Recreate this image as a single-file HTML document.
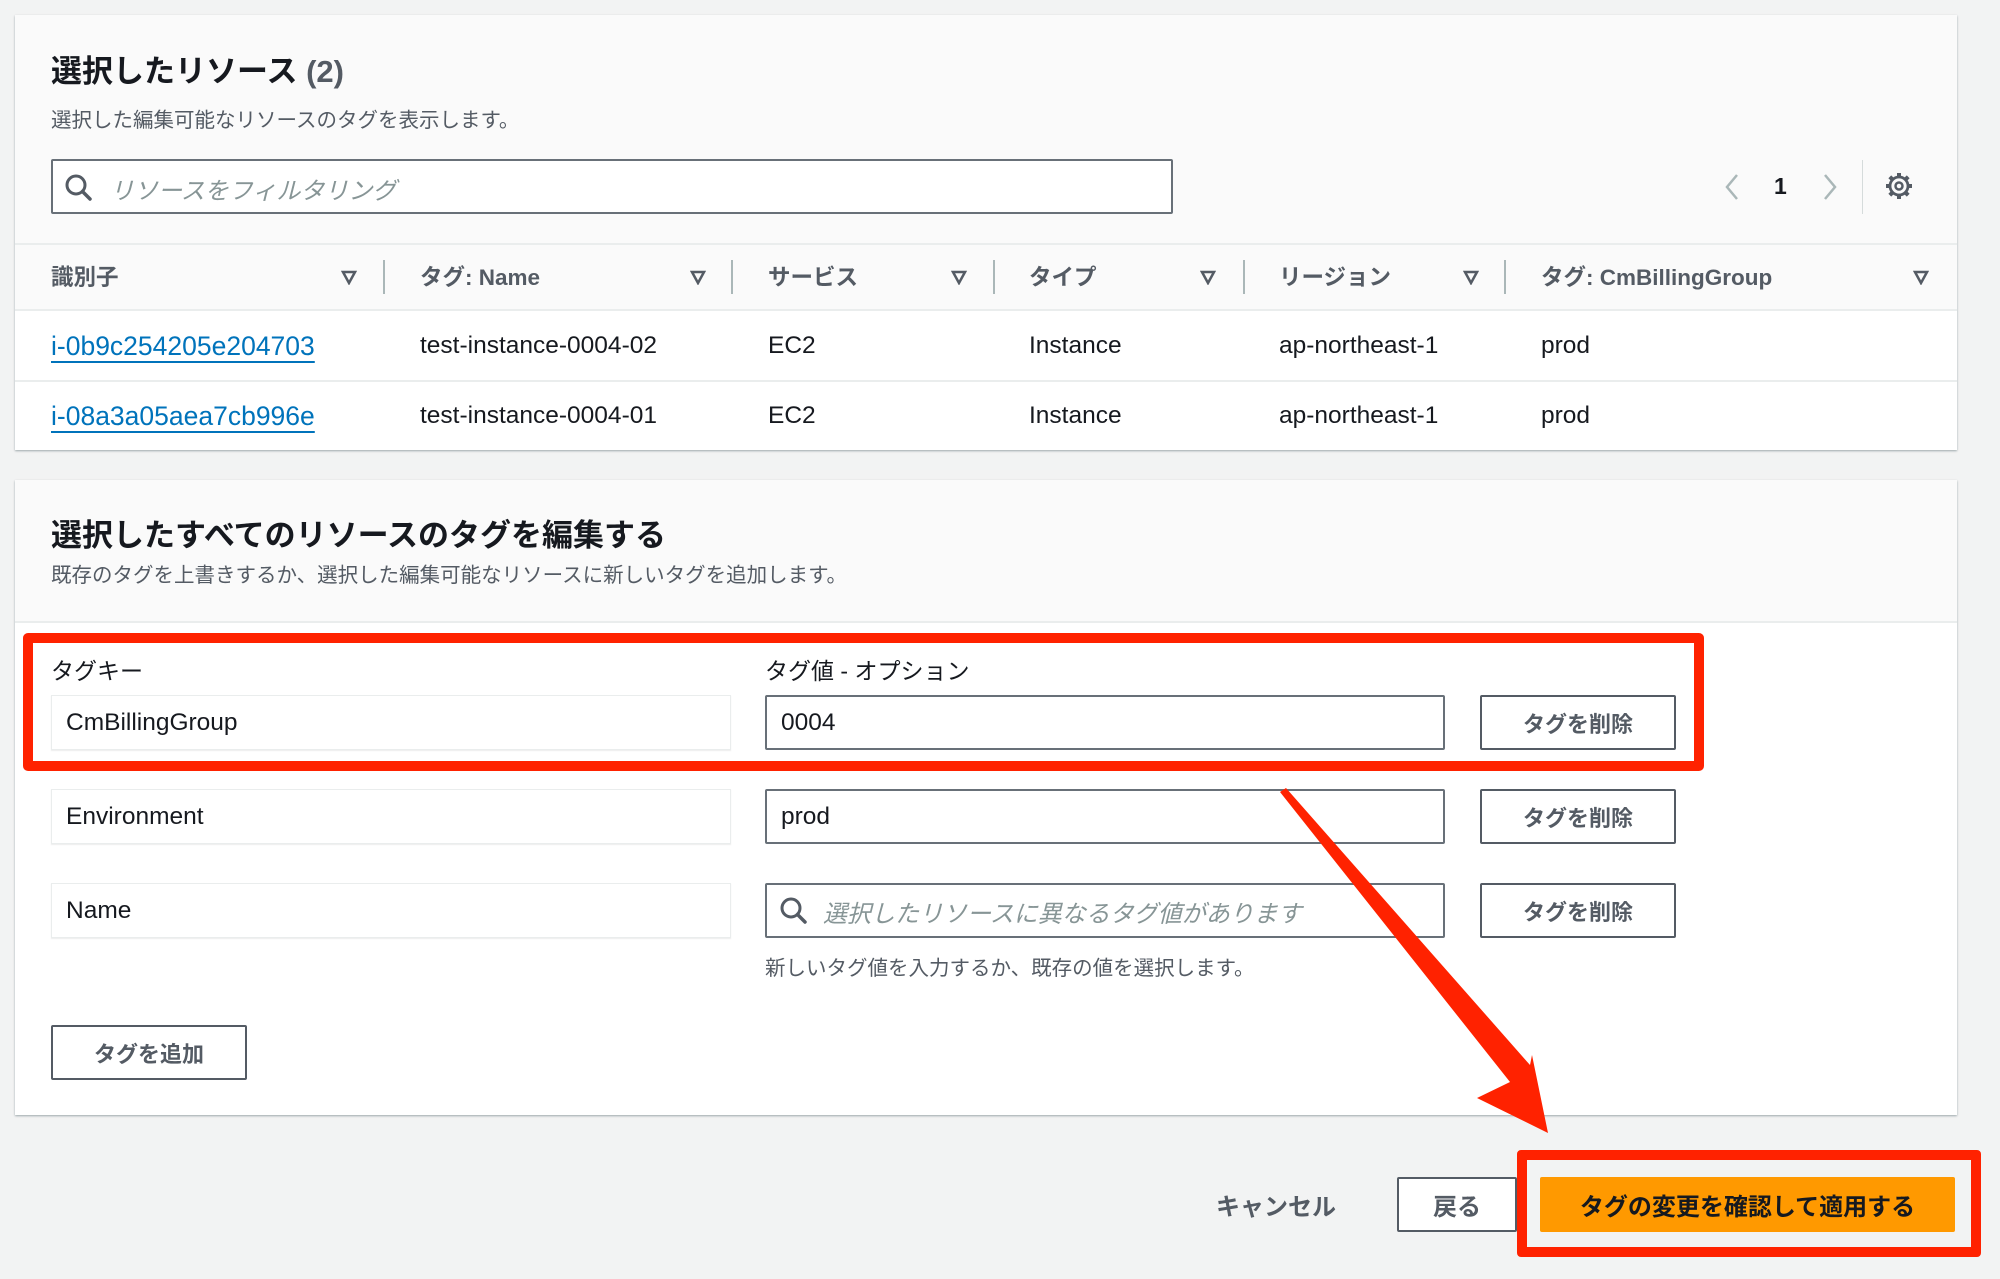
<!DOCTYPE html>
<html><head><meta charset="utf-8"><style>
*{box-sizing:border-box;margin:0;padding:0}
body{width:2000px;height:1279px;background:#f2f3f3;font-family:"Liberation Sans","Noto Sans CJK JP",sans-serif;color:#16191f;position:relative;overflow:hidden}
.a{position:absolute;white-space:nowrap}
.panel{position:absolute;background:#fafafa;box-shadow:0 1px 2px rgba(0,28,36,.35);}
.h1{font-size:31px;font-weight:bold}
.sub{font-size:20.5px;color:#545b64}
.inp{position:absolute;background:#fff;border:2px solid #687078;border-radius:2px}
.ro{position:absolute;background:#fff;border:1px solid #eaeded;box-shadow:0 1px 1px rgba(0,0,0,.08)}
.txt{font-size:24.5px;line-height:1}
.btn{position:absolute;background:#fff;border:2px solid #545b64;border-radius:2px;font-size:22px;font-weight:bold;color:#545b64;display:flex;align-items:center;justify-content:center}
.th{font-size:22.5px;font-weight:bold;color:#545b64}
.div{position:absolute;width:2px;height:34px;background:#aab7b8;top:260px}
.tri{position:absolute;top:270px}
.link{color:#0073bb;text-decoration:underline;text-underline-offset:6px;text-decoration-thickness:2px;font-size:26.5px}
</style></head><body>

<div class="panel" style="left:15px;top:15px;width:1942px;height:435px"></div>
<div class="a h1" style="left:51px;top:46px">選択したリソース <span style="color:#545b64">(2)</span></div>
<div class="a sub" style="left:51px;top:103px">選択した編集可能なリソースのタグを表示します。</div>
<div class="inp" style="left:51px;top:159px;width:1122px;height:55px"></div>
<svg class="a" style="left:64px;top:173px" width="30" height="30" viewBox="0 0 30 30"><circle cx="12" cy="12" r="9" fill="none" stroke="#545b64" stroke-width="3"/><line x1="18.5" y1="18.5" x2="26" y2="26" stroke="#545b64" stroke-width="3.5" stroke-linecap="round"/></svg>
<div class="a" style="left:110px;top:171px;font-size:24px;font-style:italic;color:#879596">リソースをフィルタリング</div>
<svg class="a" style="left:1722px;top:172px" width="20" height="30"><polyline points="15,3 5,15 15,27" fill="none" stroke="#aab7b8" stroke-width="2.5"/></svg>
<div class="a" style="left:1774px;top:173px;font-size:23px;font-weight:bold">1</div>
<svg class="a" style="left:1820px;top:172px" width="20" height="30"><polyline points="5,3 15,15 5,27" fill="none" stroke="#aab7b8" stroke-width="2.5"/></svg>
<div class="a" style="left:1862px;top:160px;width:1px;height:54px;background:#d5dbdb"></div>
<svg class="a" style="left:1884px;top:171px" width="30" height="30" viewBox="0 0 30 30"><circle cx="15" cy="15" r="9" fill="none" stroke="#545b64" stroke-width="2.8"/><circle cx="15" cy="15" r="3.5" fill="none" stroke="#545b64" stroke-width="2.5"/><g stroke="#545b64" stroke-width="4"><line x1="15" y1="2" x2="15" y2="6"/><line x1="15" y1="24" x2="15" y2="28"/><line x1="2" y1="15" x2="6" y2="15"/><line x1="24" y1="15" x2="28" y2="15"/><line x1="5.8" y1="5.8" x2="8.6" y2="8.6"/><line x1="21.4" y1="21.4" x2="24.2" y2="24.2"/><line x1="5.8" y1="24.2" x2="8.6" y2="21.4"/><line x1="21.4" y1="8.6" x2="24.2" y2="5.8"/></g></svg>

<div class="a" style="left:15px;top:243px;width:1942px;height:2px;background:#eaeded"></div>
<div class="a" style="left:15px;top:310px;width:1942px;height:140px;background:#fff"></div>
<div class="a" style="left:15px;top:309px;width:1942px;height:2px;background:#eaeded"></div>
<div class="a" style="left:15px;top:380px;width:1942px;height:2px;background:#eaeded"></div>
<div class="a th" style="left:51px;top:260px">識別子</div>
<div class="a th" style="left:420px;top:260px">タグ: Name</div>
<div class="a th" style="left:768px;top:260px">サービス</div>
<div class="a th" style="left:1029px;top:260px">タイプ</div>
<div class="a th" style="left:1279px;top:260px">リージョン</div>
<div class="a th" style="left:1541px;top:260px">タグ: CmBillingGroup</div>
<svg class="tri" style="left:341px" width="16" height="15"><polygon points="2,2 14,2 8,13" fill="none" stroke="#545b64" stroke-width="2.5"/></svg>
<svg class="tri" style="left:690px" width="16" height="15"><polygon points="2,2 14,2 8,13" fill="none" stroke="#545b64" stroke-width="2.5"/></svg>
<svg class="tri" style="left:951px" width="16" height="15"><polygon points="2,2 14,2 8,13" fill="none" stroke="#545b64" stroke-width="2.5"/></svg>
<svg class="tri" style="left:1200px" width="16" height="15"><polygon points="2,2 14,2 8,13" fill="none" stroke="#545b64" stroke-width="2.5"/></svg>
<svg class="tri" style="left:1463px" width="16" height="15"><polygon points="2,2 14,2 8,13" fill="none" stroke="#545b64" stroke-width="2.5"/></svg>
<svg class="tri" style="left:1913px" width="16" height="15"><polygon points="2,2 14,2 8,13" fill="none" stroke="#545b64" stroke-width="2.5"/></svg>
<div class="div" style="left:383px"></div><div class="div" style="left:731px"></div><div class="div" style="left:993px"></div><div class="div" style="left:1243px"></div><div class="div" style="left:1504px"></div>

<div class="a txt link" style="left:51px;top:333px">i-0b9c254205e204703</div>
<div class="a txt" style="left:420px;top:334px">test-instance-0004-02</div>
<div class="a txt" style="left:768px;top:334px">EC2</div>
<div class="a txt" style="left:1029px;top:334px">Instance</div>
<div class="a txt" style="left:1279px;top:334px">ap-northeast-1</div>
<div class="a txt" style="left:1541px;top:334px">prod</div>
<div class="a txt link" style="left:51px;top:403px">i-08a3a05aea7cb996e</div>
<div class="a txt" style="left:420px;top:404px">test-instance-0004-01</div>
<div class="a txt" style="left:768px;top:404px">EC2</div>
<div class="a txt" style="left:1029px;top:404px">Instance</div>
<div class="a txt" style="left:1279px;top:404px">ap-northeast-1</div>
<div class="a txt" style="left:1541px;top:404px">prod</div>

<div class="panel" style="left:15px;top:480px;width:1942px;height:635px"></div>
<div class="a" style="left:15px;top:621px;width:1942px;height:494px;background:#fff;border-top:2px solid #eaeded"></div>
<div class="a h1" style="left:51px;top:510px">選択したすべてのリソースのタグを編集する</div>
<div class="a sub" style="left:51px;top:558px">既存のタグを上書きするか、選択した編集可能なリソースに新しいタグを追加します。</div>

<div class="a" style="left:51px;top:652px;font-size:23px">タグキー</div>
<div class="a" style="left:765px;top:652px;font-size:23px">タグ値 - オプション</div>

<div class="ro" style="left:51px;top:695px;width:680px;height:55px"></div>
<div class="a txt" style="left:66px;top:711px">CmBillingGroup</div>
<div class="inp" style="left:765px;top:695px;width:680px;height:55px"></div>
<div class="a txt" style="left:781px;top:711px">0004</div>
<div class="btn" style="left:1480px;top:695px;width:196px;height:55px">タグを削除</div>

<div class="ro" style="left:51px;top:789px;width:680px;height:55px"></div>
<div class="a txt" style="left:66px;top:805px">Environment</div>
<div class="inp" style="left:765px;top:789px;width:680px;height:55px"></div>
<div class="a txt" style="left:781px;top:805px">prod</div>
<div class="btn" style="left:1480px;top:789px;width:196px;height:55px">タグを削除</div>

<div class="ro" style="left:51px;top:883px;width:680px;height:55px"></div>
<div class="a txt" style="left:66px;top:899px">Name</div>
<div class="inp" style="left:765px;top:883px;width:680px;height:55px"></div>
<svg class="a" style="left:779px;top:896px" width="30" height="30" viewBox="0 0 30 30"><circle cx="12" cy="12" r="9" fill="none" stroke="#545b64" stroke-width="3"/><line x1="18.5" y1="18.5" x2="26" y2="26" stroke="#545b64" stroke-width="3.5" stroke-linecap="round"/></svg>
<div class="a" style="left:823px;top:894px;font-size:24px;font-style:italic;color:#879596">選択したリソースに異なるタグ値があります</div>
<div class="btn" style="left:1480px;top:883px;width:196px;height:55px">タグを削除</div>
<div class="a sub" style="left:765px;top:951px">新しいタグ値を入力するか、既存の値を選択します。</div>

<div class="btn" style="left:51px;top:1025px;width:196px;height:55px">タグを追加</div>

<div class="a" style="left:23px;top:633px;width:1681px;height:138px;border:10px solid #ff2200;border-radius:5px"></div>

<div class="a" style="left:1216px;top:1187px;font-size:24px;font-weight:bold;color:#545b64">キャンセル</div>
<div class="btn" style="left:1397px;top:1177px;width:120px;height:55px;font-size:24px">戻る</div>
<div class="a" style="left:1540px;top:1177px;width:415px;height:55px;background:#ff9900;border-radius:2px;font-size:24px;font-weight:bold;display:flex;align-items:center;justify-content:center">タグの変更を確認して適用する</div>
<div class="a" style="left:1517px;top:1150px;width:464px;height:107px;border:10px solid #ff2200;border-radius:4px"></div>

<svg class="a" style="left:0;top:0" width="2000" height="1279"><polygon points="1280,792 1286,788 1530,1065 1532,1055 1548,1133 1477,1098 1510,1082" fill="#ff2200"/></svg>
</body></html>
